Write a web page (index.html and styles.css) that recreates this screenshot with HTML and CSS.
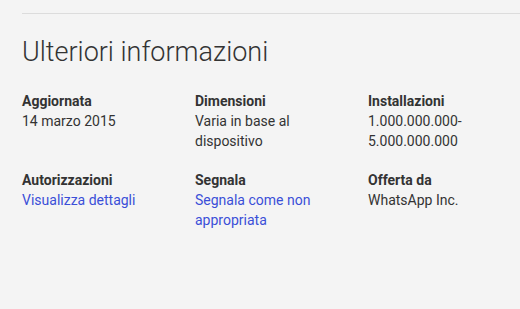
FILE: index.html
```html
<!DOCTYPE html>
<html lang="it">
<head>
    <meta charset="UTF-8">
    <link rel="stylesheet" href="styles.css">
    <title>Ulteriori informazioni</title>
</head>
<body>
    <section class="details">
        <div class="divider"></div>
        <h2 class="heading">Ulteriori informazioni</h2>

        <div class="meta">
            <div class="meta-item">
                <div class="meta-title">Aggiornata</div>
                <div class="meta-content">14 marzo 2015</div>
            </div>
            <div class="meta-item">
                <div class="meta-title">Dimensioni</div>
                <div class="meta-content">Varia in base al dispositivo</div>
            </div>
            <div class="meta-item">
                <div class="meta-title">Installazioni</div>
                <div class="meta-content">1.000.000.000-<br>5.000.000.000</div>
            </div>
            <div class="meta-item">
                <div class="meta-title">Autorizzazioni</div>
                <a class="meta-link" href="#">Visualizza dettagli</a>
            </div>
            <div class="meta-item">
                <div class="meta-title">Segnala</div>
                <a class="meta-link" href="#">Segnala come non appropriata</a>
            </div>
            <div class="meta-item">
                <div class="meta-title">Offerta da</div>
                <div class="meta-content">WhatsApp Inc.</div>
            </div>
        </div>
    </section>
</body>
</html>
```

FILE: styles.css
```css
* {
    font-family: Roboto, "Liberation Sans", sans-serif;
}

html, body {
    margin: 0;
    padding: 0;

    background-color: #f4f4f4;
}

.details {
    padding-top: 13px;
    padding-left: 22px;
}

.divider {
    height: 1px;

    background-color: #dcdcdc;
}

.heading {
    margin: 22px 0 0 0;

    font-size: 27px;
    font-weight: 300;
    line-height: 32px;
    color: #333;
}

.meta {
    display: grid;
    grid-template-columns: 173px 173px 173px;
    row-gap: 19px;

    margin-top: 23px;
}

.meta-title {
    font-size: 14px;
    font-weight: bold;
    line-height: 20px;
    color: #333;
}

.meta-content,
.meta-link {
    display: block;

    padding-right: 20px;

    font-size: 14px;
    line-height: 20px;
    color: #333;
}

.meta-link {
    color: #3b4fd8;
    text-decoration: none;
}
```
